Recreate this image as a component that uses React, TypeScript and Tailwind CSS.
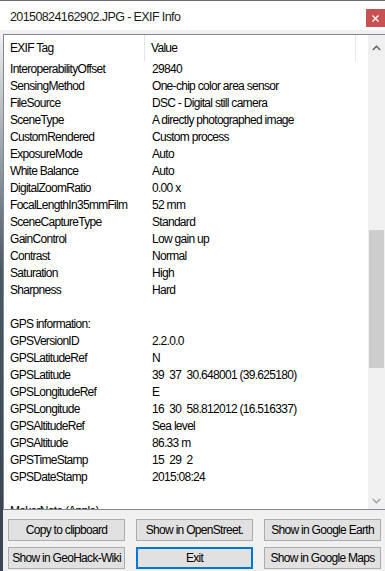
import React from "react";

const rows: [string, string][] = [
  ["InteroperabilityOffset", "29840"],
  ["SensingMethod", "One-chip color area sensor"],
  ["FileSource", "DSC - Digital still camera"],
  ["SceneType", "A directly photographed image"],
  ["CustomRendered", "Custom process"],
  ["ExposureMode", "Auto"],
  ["White Balance", "Auto"],
  ["DigitalZoomRatio", "0.00 x"],
  ["FocalLengthIn35mmFilm", "52 mm"],
  ["SceneCaptureType", "Standard"],
  ["GainControl", "Low gain up"],
  ["Contrast", "Normal"],
  ["Saturation", "High"],
  ["Sharpness", "Hard"],
  ["", ""],
  ["GPS information:", ""],
  ["GPSVersionID", "2.2.0.0"],
  ["GPSLatitudeRef", "N"],
  ["GPSLatitude", "39  37  30.648001 (39.625180)"],
  ["GPSLongitudeRef", "E"],
  ["GPSLongitude", "16  30  58.812012 (16.516337)"],
  ["GPSAltitudeRef", "Sea level"],
  ["GPSAltitude", "86.33 m"],
  ["GPSTimeStamp", "15  29  2"],
  ["GPSDateStamp", "2015:08:24"],
  ["", ""],
  ["MakerNote (Apple)", ""],
];

function Btn({ label, primary }: { label: string; primary?: boolean }) {
  return (
    <div
      className={
        "h-[22px] flex items-center justify-center bg-[#e1e1e1] text-black whitespace-nowrap " +
        (primary ? "border-2 border-[#0078d7]" : "border border-[#adadad]")
      }
    >
      {label}
    </div>
  );
}

export default function App() {
  return (
    <div
      className="w-[385px] h-[571px] bg-[#f0f0f0] flex flex-col overflow-hidden text-[12px] tracking-[-0.7px] text-black"
      style={{ fontFamily: '"Liberation Sans", Arial, sans-serif' }}
    >
      {/* Title bar */}
      <div className="h-[30px] bg-white flex items-start justify-between border-t border-[#6b6b6b]">
        <div className="pl-[10px] pt-[7px] text-[12.5px] tracking-[-0.6px] text-[#1a1a1a]">
          20150824162902.JPG - EXIF Info
        </div>
        <div className="mt-[8px] w-[19px] h-[18px] bg-[#c75050] flex items-center justify-center">
          <svg width="7" height="7" viewBox="0 0 7 7">
            <path d="M0.5 0.5 L6.5 6.5 M6.5 0.5 L0.5 6.5" stroke="white" strokeWidth="1.4" />
          </svg>
        </div>
      </div>
      <div className="h-[4px]" />

      {/* List area */}
      <div className="h-[476px] flex flex-row">
        <div className="w-[3px] bg-gradient-to-b from-[#f0f0f0] via-[#4b5868] to-[#3a4656]" />
        <div className="flex-1 flex flex-row border-l border-t border-b border-[#828790] bg-white overflow-hidden">
          <div className="flex-1 flex flex-col overflow-hidden">
            {/* header */}
            <div className="h-[26px] flex flex-row items-stretch shrink-0">
              <div className="w-[141px] flex items-center pl-[6px] border-r border-[#e5e5e5]">EXIF Tag</div>
              <div className="w-[211px] flex items-center pl-[6px] border-r border-[#e5e5e5]">Value</div>
              <div className="flex-1" />
            </div>
            {/* rows */}
            <div className="flex-1 overflow-hidden">
              {rows.map(([k, v], i) => (
                <div key={i} className="h-[17px] flex flex-row items-center leading-[17px] whitespace-pre">
                  <div className="w-[142px] pl-[6px]">{k}</div>
                  <div className="pl-[6px]">{v}</div>
                </div>
              ))}
            </div>
          </div>
          {/* scrollbar */}
          <div className="w-[17px] bg-[#f0f0f0] flex flex-col items-stretch">
            <div className="h-[25px] flex items-center justify-center">
              <svg width="9" height="6" viewBox="0 0 9 6">
                <path d="M0.8 5 L4.5 1.3 L8.2 5" stroke="#606060" strokeWidth="1.5" fill="none" />
              </svg>
            </div>
            <div className="h-[170px]" />
            <div className="h-[138px] bg-[#cdcdcd] mx-[1px]" />
            <div className="flex-1" />
            <div className="h-[17px] flex items-center justify-center">
              <svg width="9" height="6" viewBox="0 0 9 6">
                <path d="M0.8 1 L4.5 4.7 L8.2 1" stroke="#a0a0a0" strokeWidth="1.5" fill="none" />
              </svg>
            </div>
          </div>
        </div>
      </div>

      {/* Buttons */}
      <div className="flex-1 flex flex-row">
        <div className="w-[3px] bg-[#3a4656]" />
        <div className="flex-1 pl-[5px] pr-[4px] pt-[9px] grid grid-cols-3 gap-x-[11px] gap-y-[6px] content-start">
          <Btn label="Copy to clipboard" />
          <Btn label="Show in OpenStreet." />
          <Btn label="Show in Google Earth" />
          <Btn label="Show in GeoHack-Wiki" />
          <Btn label="Exit" primary />
          <Btn label="Show in Google Maps" />
        </div>
      </div>
    </div>
  );
}
